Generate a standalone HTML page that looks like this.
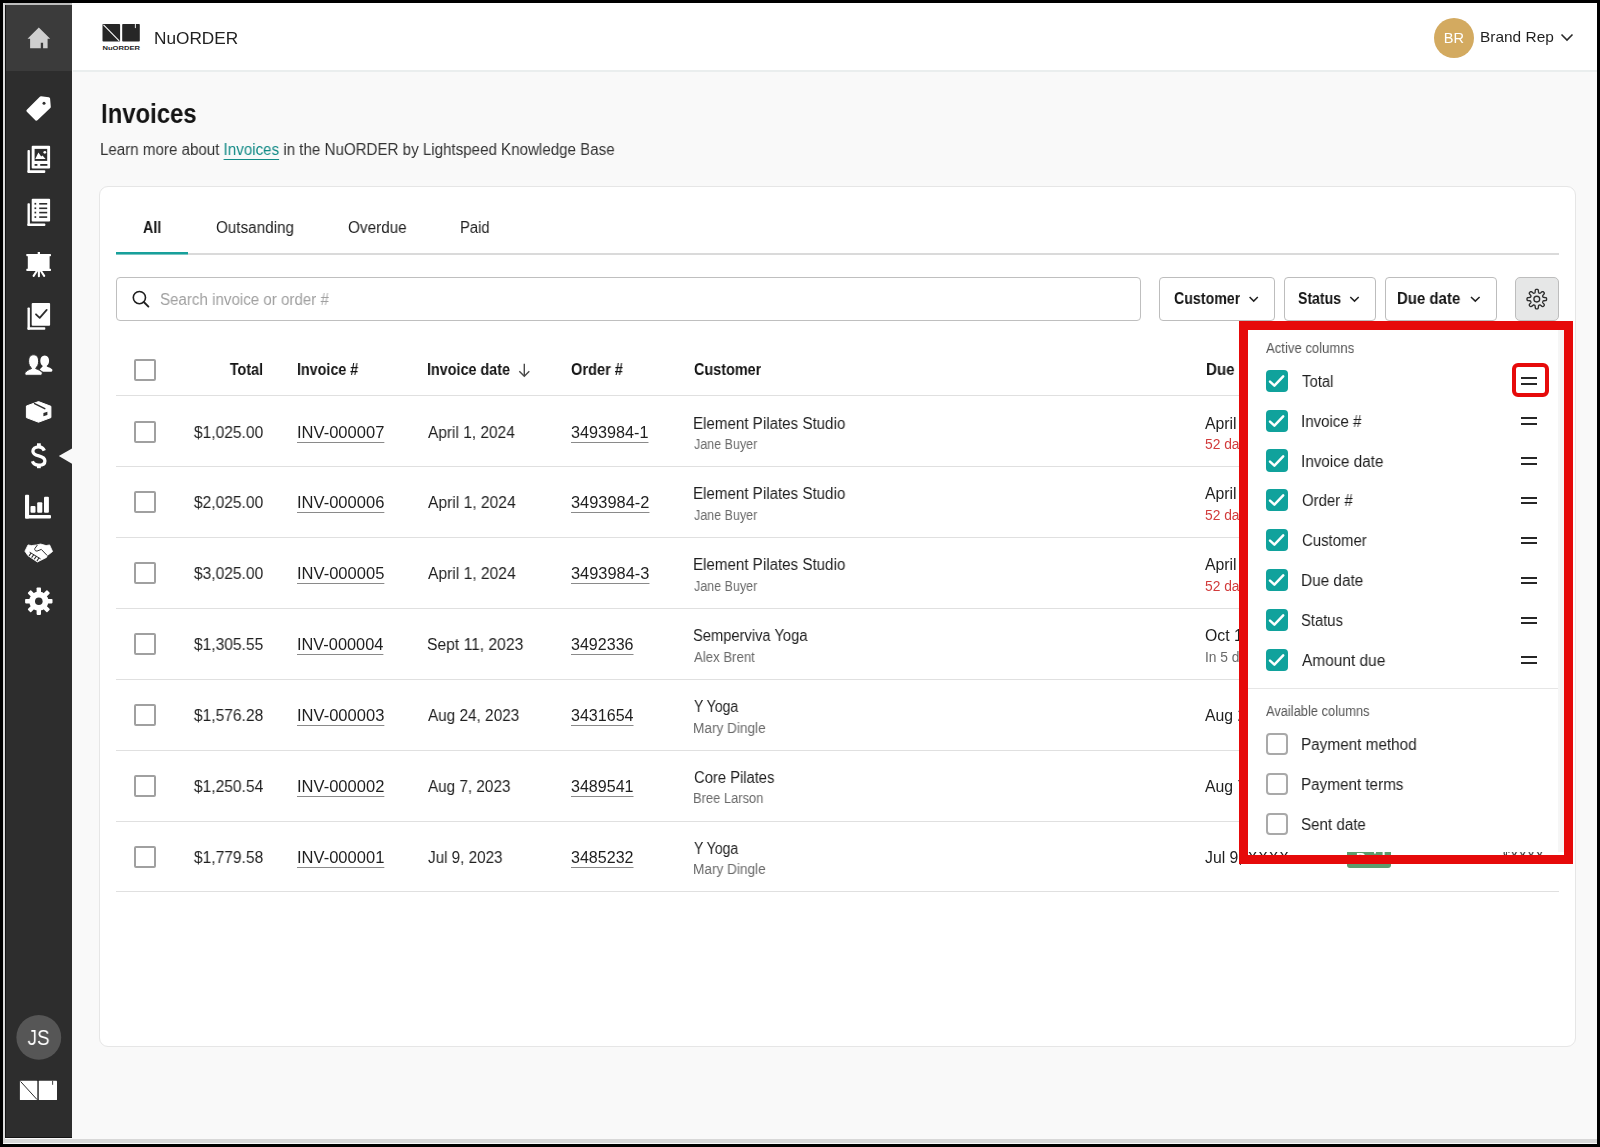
<!DOCTYPE html>
<html><head><meta charset="utf-8"><title>Invoices</title><style>
*{margin:0;padding:0;box-sizing:border-box;}
html,body{width:1600px;height:1147px;overflow:hidden;background:#000;font-family:"Liberation Sans", sans-serif;}
.a{position:absolute;}
.t{position:absolute;white-space:nowrap;font-family:"Liberation Sans", sans-serif;z-index:2;will-change:transform;}
</style></head>
<body>
<!-- frame -->
<div class="a" style="left:3px;top:3px;width:1594px;height:1141px;background:#f9f9f9;"></div>
<div class="a" style="left:3px;top:1139px;width:1594px;height:4px;background:#d8d8d8;"></div>
<!-- header -->
<div class="a" style="left:72px;top:3px;width:1525px;height:67px;background:#fff;"></div>
<div class="a" style="left:73px;top:70px;width:1524px;height:2px;background:#eaeeee;"></div>
<!-- sidebar -->
<div class="a" style="left:3px;top:3px;width:69px;height:2px;background:#bdbdbd;"></div>
<div class="a" style="left:3px;top:3px;width:2px;height:1136px;background:#dcdcdc;"></div>
<div class="a" style="left:5px;top:5px;width:67px;height:1133px;background:#141414;"></div>
<div class="a" style="left:6px;top:5px;width:66px;height:1132px;background:#2d2d2d;"></div>
<div class="a" style="left:6px;top:5px;width:66px;height:66px;background:#3b3b3b;"></div>
<svg class="a" style="left:0;top:0;" width="72" height="1147" viewBox="0 0 72 1147">
 <!-- home -->
 <path d="M38.8 27.5 L50.2 38.8 L47.6 38.8 L47.6 48.2 L43.1 48.2 L43.1 42.7 L40.8 42.7 L40.8 48.2 L30.1 48.2 L30.1 38.8 L27.5 38.8 Z" fill="#cfcfcf"/>
 <!-- tag -->
 <path d="M40.9 97.8 L48.6 98.7 L49.3 106.9 L36.4 119.2 L27.9 110.7 Z" fill="#fff" stroke="#fff" stroke-width="3" stroke-linejoin="round"/>
 <circle cx="44" cy="103.2" r="1.5" fill="#2d2d2d"/>
 <!-- catalog -->
 <rect x="27.5" y="150.1" width="2.4" height="22.8" rx="0.8" fill="#fff"/>
 <rect x="27.5" y="170.3" width="17.8" height="2.6" rx="0.8" fill="#fff"/>
 <rect x="31.7" y="145.7" width="18.4" height="22.9" rx="1" fill="#fff"/>
 <rect x="34.6" y="148.9" width="12.6" height="12" fill="#2d2d2d"/>
 <path d="M35.3 159 L38.4 152.4 L41.2 156.6 L42.5 155.6 L45.6 159 Z" fill="#fff"/>
 <circle cx="44.8" cy="152.3" r="1.4" fill="#fff"/>
 <rect x="34.6" y="164" width="2.8" height="1.8" fill="#2d2d2d"/>
 <rect x="40.2" y="164" width="7.2" height="1.8" fill="#2d2d2d"/>
 <!-- lists -->
 <rect x="27.5" y="203.3" width="2.4" height="22.7" rx="0.8" fill="#fff"/>
 <rect x="27.5" y="223.4" width="17.8" height="2.6" rx="0.8" fill="#fff"/>
 <rect x="31.7" y="198.8" width="18.4" height="22.8" rx="1" fill="#fff"/>
 <g fill="#2d2d2d">
  <rect x="34.5" y="202.9" width="1.7" height="1.7"/><rect x="39.2" y="203" width="8" height="1.6"/>
  <rect x="34.5" y="207.4" width="1.7" height="1.7"/><rect x="39.2" y="207.5" width="8" height="1.6"/>
  <rect x="34.5" y="211.7" width="1.7" height="1.7"/><rect x="39.2" y="211.8" width="8" height="1.6"/>
  <rect x="34.5" y="216.2" width="1.7" height="1.7"/><rect x="39.2" y="216.3" width="8" height="1.6"/>
 </g>
 <!-- presentation -->
 <rect x="26.3" y="254" width="24.7" height="2.2" rx="0.6" fill="#fff"/>
 <rect x="27.8" y="254" width="21.8" height="16.8" fill="#fff"/>
 <rect x="26.3" y="268.8" width="24.7" height="2.1" rx="0.6" fill="#fff"/>
 <rect x="37.7" y="252" width="2.3" height="3" fill="#fff"/>
 <path d="M38.9 270 L38.9 276.3 M36.8 271 L33.6 275.8 M41 271 L44.2 275.8" stroke="#fff" stroke-width="2.1" stroke-linecap="round"/>
 <!-- checklist -->
 <rect x="27.5" y="307.5" width="2.4" height="22.3" rx="0.8" fill="#fff"/>
 <rect x="27.5" y="327.2" width="17.8" height="2.6" rx="0.8" fill="#fff"/>
 <rect x="31.7" y="303" width="18.4" height="22.8" rx="1" fill="#fff"/>
 <path d="M36 314.3 L39.7 317.9 L46.7 309.9" stroke="#2d2d2d" stroke-width="1.8" fill="none" stroke-linecap="round" stroke-linejoin="round"/>
 <!-- people -->
 <path d="M44.7 355.4 C47.6 355.4 49.1 357.6 49.1 360.7 C49.1 363.3 48 365 46.8 365.8 L46.8 366.4 C48.8 367.2 51.6 368.2 52.3 369.5 C52.6 370.3 52.2 371.8 51.2 371.8 L43 371.8 C41.5 370.6 40.3 369.8 39.6 369.4 L42.6 366.4 L42.6 365.8 C41.3 365 40.3 363.3 40.3 360.7 C40.3 357.6 41.8 355.4 44.7 355.4 Z" fill="#fff"/>
 <path d="M33.6 354.8 C37 354.8 38.6 357.5 38.6 361.3 C38.6 364.6 37.4 366.8 35.8 367.9 L35.8 368.6 C38.6 369.6 41.6 371.2 42.2 372.6 C42.5 373.6 42 375.3 40.8 375.3 L26.3 375.3 C25 375.3 24.6 373.8 25 372.8 C25.8 371.2 28.6 369.6 31.4 368.6 L31.4 367.9 C29.8 366.8 28.6 364.6 28.6 361.3 C28.6 357.5 30.2 354.8 33.6 354.8 Z" fill="#fff" stroke="#2d2d2d" stroke-width="1"/>
 <!-- box -->
 <path d="M26.4 406 L38.5 401.6 L50.9 406.3 L50.9 417.6 L38.5 422.2 L26.4 417.6 Z" fill="#fff" stroke="#fff" stroke-width="1" stroke-linejoin="round"/>
 <path d="M34.6 403.6 L44.8 408.7" stroke="#2d2d2d" stroke-width="1.5" stroke-linecap="round"/>
 <path d="M43.4 412.9 L47.4 411.8 L47.4 415 L43.4 416.2 Z" fill="#2d2d2d"/>
 <!-- dollar -->
 <path d="M44.3 450.6 C43.4 448.2 41.4 446.9 38.7 446.9 C35.2 446.9 32.9 448.7 32.9 451.3 C32.9 454.3 35.6 455.1 38.8 455.9 C42.3 456.8 44.9 457.9 44.9 461 C44.9 463.7 42.5 465.2 38.8 465.2 C35.7 465.2 33.3 463.9 32.4 461.3" stroke="#fff" stroke-width="3.3" fill="none" stroke-linecap="butt"/>
 <rect x="37" y="443.3" width="3.8" height="4" fill="#fff"/>
 <rect x="37" y="464.3" width="3.8" height="3.9" fill="#fff"/>
 <!-- active arrow -->
 <path d="M58.8 455.9 L72 448.4 L72 463.7 Z" fill="#f9f9f9"/>
 <!-- chart -->
 <rect x="25" y="494.7" width="4.1" height="23.9" rx="1" fill="#fff"/>
 <rect x="25" y="514.9" width="26" height="3.7" rx="1" fill="#fff"/>
 <rect x="30.5" y="505.9" width="5" height="6.8" rx="1" fill="#fff"/>
 <rect x="37.2" y="502.2" width="5.1" height="10.5" rx="1" fill="#fff"/>
 <rect x="44" y="496.8" width="4.9" height="15.9" rx="1" fill="#fff"/>
 <!-- handshake -->
 <path d="M24.9 551.2 L28 544.9 L31.5 545.6 L36.7 544.9 L40.6 544 L46.1 545.6 L49.6 544.9 L52.6 551.5 L47.2 555.7 L46.5 557.4 L39.5 560.9 L37.4 562 L28 555.7 Z" fill="#fff" stroke="#fff" stroke-width="0.8" stroke-linejoin="round"/>
 <path d="M37.2 545.3 L34.8 548.6 C34.3 549.6 35.3 551.3 37 551.1 L41.3 549.4 L47 555.3" stroke="#2d2d2d" stroke-width="1" fill="none" stroke-linecap="round"/>
 <path d="M29.6 552.2 L40.6 558.9" stroke="#2d2d2d" stroke-width="1"/>
 <path d="M31.3 552.9 L29 555.9 M33.9 554.5 L31.6 557.6 M36.5 556.1 L34.2 559.3 M39.1 557.7 L36.9 561" stroke="#2d2d2d" stroke-width="1.1"/>
 <!-- gear -->
 <g transform="translate(38.8 601.2)" fill="#fff">
  <circle r="9.6"/>
  <rect x="-2.2" y="-13.7" width="4.4" height="27.4" rx="0.8"/>
  <rect x="-2.2" y="-13.7" width="4.4" height="27.4" rx="0.8" transform="rotate(45)"/>
  <rect x="-2.2" y="-13.7" width="4.4" height="27.4" rx="0.8" transform="rotate(90)"/>
  <rect x="-2.2" y="-13.7" width="4.4" height="27.4" rx="0.8" transform="rotate(135)"/>
  <circle r="3.8" fill="#2d2d2d"/>
 </g>
 <!-- JS avatar -->
 <circle cx="38.8" cy="1037.4" r="22.4" fill="#565656"/>
 <!-- bottom logo -->
 <rect x="19.9" y="1080.8" width="17.4" height="19.2" rx="0.6" fill="#fff"/>
 <rect x="38.8" y="1080.8" width="18.2" height="19.2" rx="0.6" fill="#fff"/>
 <path d="M20.6 1081.5 L37 1099.5" stroke="#2d2d2d" stroke-width="1"/>
 <rect x="52.2" y="1080.8" width="0.9" height="4" fill="#2d2d2d"/>
</svg>
<!-- header logo -->
<svg class="a" style="left:0;top:0;" width="260" height="70" viewBox="0 0 260 70">
 <rect x="102.5" y="23.9" width="17.6" height="17.6" rx="0.8" fill="#262626"/>
 <rect x="122.2" y="23.9" width="17.6" height="17.6" rx="0.8" fill="#262626"/>
 <path d="M103.5 24.9 L119.2 40.8" stroke="#fff" stroke-width="1.1"/>
 <rect x="134.9" y="23.9" width="0.9" height="4.2" fill="#fff"/>
 <text x="102.5" y="50.1" font-family="Liberation Sans" font-weight="700" font-size="6.2" fill="#262626" textLength="37.5" lengthAdjust="spacingAndGlyphs">NuORDER</text>
</svg>
<!-- avatar BR -->
<div class="a" style="left:1433.8px;top:17.8px;width:40px;height:40px;border-radius:50%;background:#d3aa60;"></div>
<svg class="a" style="left:1555px;top:28px;" width="24" height="20" viewBox="1555 28 24 20">
 <path d="M1561.5 34.5 L1567 40 L1572.5 34.5" stroke="#2a2a2a" stroke-width="1.6" fill="none"/>
</svg>
<!-- card -->
<div class="a" style="left:99px;top:186px;width:1477px;height:861px;background:#fff;border:1px solid #e6e6e6;border-radius:9px;"></div>
<!-- tabs line -->
<div class="a" style="left:116px;top:253px;width:1443px;height:2px;background:#dadada;"></div>
<div class="a" style="left:116px;top:252px;width:72px;height:2px;background:#17a09b;"></div><div class="a" style="left:116px;top:254px;width:72px;height:1px;background:#7cc6c3;"></div>
<!-- search -->
<div class="a" style="left:116px;top:277px;width:1025px;height:44px;border:1px solid #bfbfbf;border-radius:4px;background:#fff;"></div>
<svg class="a" style="left:128px;top:286px;" width="26" height="26" viewBox="128 286 26 26">
 <circle cx="139.4" cy="297.6" r="6.1" stroke="#1e1e1e" stroke-width="1.6" fill="none"/>
 <path d="M143.8 302 L148.4 306.6" stroke="#222" stroke-width="1.9" stroke-linecap="round"/>
</svg>
<!-- filter buttons -->
<div class="a" style="left:1159px;top:277px;width:116px;height:44px;border:1px solid #bdbdbd;border-radius:4px;background:#fff;"></div>
<div class="a" style="left:1284px;top:277px;width:92px;height:44px;border:1px solid #bdbdbd;border-radius:4px;background:#fff;"></div>
<div class="a" style="left:1385px;top:277px;width:112px;height:44px;border:1px solid #bdbdbd;border-radius:4px;background:#fff;"></div>
<div class="a" style="left:1515px;top:277px;width:44px;height:44px;border:1px solid #bdbdbd;border-radius:5px;background:#e6e7e7;"></div>
<svg class="a" style="left:1100px;top:270px;" width="480" height="60" viewBox="1100 270 480 60">
 <g stroke="#222" stroke-width="1.5" fill="none" stroke-linejoin="miter">
  <path d="M1249.6 297 L1253.7 301.1 L1257.8 297"/>
  <path d="M1350.3 297 L1354.5 301.1 L1358.7 297"/>
  <path d="M1471 297 L1475.3 301.1 L1479.6 297"/>
 </g>
 <g transform="translate(1536.8 299.1)">
  <path d="M0.00 -9.80 L0.26 -9.79 L0.51 -9.77 L0.76 -9.72 L1.01 -9.62 L1.24 -9.42 L1.43 -9.04 L1.55 -8.39 L1.62 -7.60 L1.67 -6.95 L1.76 -6.56 L1.88 -6.36 L2.02 -6.23 L2.18 -6.14 L2.33 -6.07 L2.49 -6.01 L2.65 -5.94 L2.81 -5.88 L2.97 -5.84 L3.16 -5.82 L3.40 -5.89 L3.74 -6.10 L4.23 -6.51 L4.83 -7.03 L5.38 -7.40 L5.79 -7.54 L6.09 -7.52 L6.33 -7.41 L6.54 -7.27 L6.74 -7.11 L6.93 -6.93 L7.11 -6.74 L7.27 -6.54 L7.41 -6.33 L7.52 -6.09 L7.54 -5.79 L7.40 -5.38 L7.03 -4.83 L6.51 -4.23 L6.10 -3.74 L5.89 -3.40 L5.82 -3.16 L5.84 -2.97 L5.88 -2.81 L5.94 -2.65 L6.01 -2.49 L6.07 -2.33 L6.14 -2.18 L6.23 -2.02 L6.36 -1.88 L6.56 -1.76 L6.95 -1.67 L7.60 -1.62 L8.39 -1.55 L9.04 -1.43 L9.42 -1.24 L9.62 -1.01 L9.72 -0.76 L9.77 -0.51 L9.79 -0.26 L9.80 -0.00 L9.79 0.26 L9.77 0.51 L9.72 0.76 L9.62 1.01 L9.42 1.24 L9.04 1.43 L8.39 1.55 L7.60 1.62 L6.95 1.67 L6.56 1.76 L6.36 1.88 L6.23 2.02 L6.14 2.18 L6.07 2.33 L6.01 2.49 L5.94 2.65 L5.88 2.81 L5.84 2.97 L5.82 3.16 L5.89 3.40 L6.10 3.74 L6.51 4.23 L7.03 4.83 L7.40 5.38 L7.54 5.79 L7.52 6.09 L7.41 6.33 L7.27 6.54 L7.11 6.74 L6.93 6.93 L6.74 7.11 L6.54 7.27 L6.33 7.41 L6.09 7.52 L5.79 7.54 L5.38 7.40 L4.83 7.03 L4.23 6.51 L3.74 6.10 L3.40 5.89 L3.16 5.82 L2.97 5.84 L2.81 5.88 L2.65 5.94 L2.49 6.01 L2.33 6.07 L2.18 6.14 L2.02 6.23 L1.88 6.36 L1.76 6.56 L1.67 6.95 L1.62 7.60 L1.55 8.39 L1.43 9.04 L1.24 9.42 L1.01 9.62 L0.76 9.72 L0.51 9.77 L0.26 9.79 L0.00 9.80 L-0.26 9.79 L-0.51 9.77 L-0.76 9.72 L-1.01 9.62 L-1.24 9.42 L-1.43 9.04 L-1.55 8.39 L-1.62 7.60 L-1.67 6.95 L-1.76 6.56 L-1.88 6.36 L-2.02 6.23 L-2.18 6.14 L-2.33 6.07 L-2.49 6.01 L-2.65 5.94 L-2.81 5.88 L-2.97 5.84 L-3.16 5.82 L-3.40 5.89 L-3.74 6.10 L-4.23 6.51 L-4.83 7.03 L-5.38 7.40 L-5.79 7.54 L-6.09 7.52 L-6.33 7.41 L-6.54 7.27 L-6.74 7.11 L-6.93 6.93 L-7.11 6.74 L-7.27 6.54 L-7.41 6.33 L-7.52 6.09 L-7.54 5.79 L-7.40 5.38 L-7.03 4.83 L-6.51 4.23 L-6.10 3.74 L-5.89 3.40 L-5.82 3.16 L-5.84 2.97 L-5.88 2.81 L-5.94 2.65 L-6.01 2.49 L-6.07 2.33 L-6.14 2.18 L-6.23 2.02 L-6.36 1.88 L-6.56 1.76 L-6.95 1.67 L-7.60 1.62 L-8.39 1.55 L-9.04 1.43 L-9.42 1.24 L-9.62 1.01 L-9.72 0.76 L-9.77 0.51 L-9.79 0.26 L-9.80 0.00 L-9.79 -0.26 L-9.77 -0.51 L-9.72 -0.76 L-9.62 -1.01 L-9.42 -1.24 L-9.04 -1.43 L-8.39 -1.55 L-7.60 -1.62 L-6.95 -1.67 L-6.56 -1.76 L-6.36 -1.88 L-6.23 -2.02 L-6.14 -2.18 L-6.07 -2.33 L-6.01 -2.49 L-5.94 -2.65 L-5.88 -2.81 L-5.84 -2.97 L-5.82 -3.16 L-5.89 -3.40 L-6.10 -3.74 L-6.51 -4.23 L-7.03 -4.83 L-7.40 -5.38 L-7.54 -5.79 L-7.52 -6.09 L-7.41 -6.33 L-7.27 -6.54 L-7.11 -6.74 L-6.93 -6.93 L-6.74 -7.11 L-6.54 -7.27 L-6.33 -7.41 L-6.09 -7.52 L-5.79 -7.54 L-5.38 -7.40 L-4.83 -7.03 L-4.23 -6.51 L-3.74 -6.10 L-3.40 -5.89 L-3.16 -5.82 L-2.97 -5.84 L-2.81 -5.88 L-2.65 -5.94 L-2.49 -6.01 L-2.33 -6.07 L-2.18 -6.14 L-2.02 -6.23 L-1.88 -6.36 L-1.76 -6.56 L-1.67 -6.95 L-1.62 -7.60 L-1.55 -8.39 L-1.43 -9.04 L-1.24 -9.42 L-1.01 -9.62 L-0.76 -9.72 L-0.51 -9.77 L-0.26 -9.79 Z" fill="none" stroke="#2e2e2e" stroke-width="1.35"/>
  <circle r="2.9" fill="none" stroke="#2e2e2e" stroke-width="1.35"/>
 </g>
</svg>

<div class="a" style="left:134.2px;top:358.70px;width:21.6px;height:22px;border:2px solid #a0a0a0;border-radius:2px;background:#fff;z-index:1;"></div>
<div class="a" style="left:134.2px;top:420.60px;width:21.6px;height:22px;border:2px solid #a0a0a0;border-radius:2px;background:#fff;z-index:1;"></div>
<div class="a" style="left:134.2px;top:491.45px;width:21.6px;height:22px;border:2px solid #a0a0a0;border-radius:2px;background:#fff;z-index:1;"></div>
<div class="a" style="left:134.2px;top:562.30px;width:21.6px;height:22px;border:2px solid #a0a0a0;border-radius:2px;background:#fff;z-index:1;"></div>
<div class="a" style="left:134.2px;top:633.15px;width:21.6px;height:22px;border:2px solid #a0a0a0;border-radius:2px;background:#fff;z-index:1;"></div>
<div class="a" style="left:134.2px;top:704.00px;width:21.6px;height:22px;border:2px solid #a0a0a0;border-radius:2px;background:#fff;z-index:1;"></div>
<div class="a" style="left:134.2px;top:774.85px;width:21.6px;height:22px;border:2px solid #a0a0a0;border-radius:2px;background:#fff;z-index:1;"></div>
<div class="a" style="left:134.2px;top:845.70px;width:21.6px;height:22px;border:2px solid #a0a0a0;border-radius:2px;background:#fff;z-index:1;"></div>
<div class="a" style="left:116px;top:395.40px;width:1443px;height:1px;background:#e0e0e0;z-index:1;"></div>
<div class="a" style="left:116px;top:466.25px;width:1443px;height:1px;background:#e0e0e0;z-index:1;"></div>
<div class="a" style="left:116px;top:537.10px;width:1443px;height:1px;background:#e0e0e0;z-index:1;"></div>
<div class="a" style="left:116px;top:607.95px;width:1443px;height:1px;background:#e0e0e0;z-index:1;"></div>
<div class="a" style="left:116px;top:678.80px;width:1443px;height:1px;background:#e0e0e0;z-index:1;"></div>
<div class="a" style="left:116px;top:749.65px;width:1443px;height:1px;background:#e0e0e0;z-index:1;"></div>
<div class="a" style="left:116px;top:820.50px;width:1443px;height:1px;background:#e0e0e0;z-index:1;"></div>
<div class="a" style="left:116px;top:891.35px;width:1443px;height:1px;background:#e0e0e0;z-index:1;"></div>
<svg class="a" style="left:512px;top:360px;z-index:2;" width="24" height="22" viewBox="512 360 24 22"><g stroke="#4a4a4a" stroke-width="1.4" fill="none"><path d="M524.3 363.8 L524.3 376"/><path d="M519.3 371.2 L524.3 376.2 L529.3 371.2"/></g></svg>
<div class="a" style="left:1346.7px;top:846px;width:44px;height:21.5px;background:#5b9d6d;border-radius:3px;z-index:1;"></div>
<div class="a" style="left:1239px;top:321px;width:334px;height:543px;border:9px solid #e60a0a;z-index:7;"></div>
<div class="a" style="left:1248px;top:330px;width:316px;height:522px;background:#fff;z-index:5;"></div>
<div class="a" style="left:1558px;top:330px;width:6px;height:522px;background:#f6f6f6;z-index:5;"></div>
<div class="a" style="left:1248px;top:688px;width:310px;height:1px;background:#e6e6e6;z-index:5;"></div>
<div class="a" style="left:1265.7px;top:369.70px;width:22.2px;height:22.2px;border-radius:4px;background:#10a29c;z-index:6;"></div>
<svg class="a" style="left:1260px;top:364.80px;z-index:6;" width="34" height="32" viewBox="1260 364.80 34 32"><path d="M1270 381.40 L1274.4 385.40 L1283.2 376.20" stroke="#fff" stroke-width="2.5" fill="none" stroke-linecap="round" stroke-linejoin="round"/></svg>
<div class="a" style="left:1521px;top:377px;width:16px;height:2px;background:#262626;z-index:6;"></div>
<div class="a" style="left:1521px;top:383px;width:16px;height:2px;background:#262626;z-index:6;"></div>
<div class="a" style="left:1265.7px;top:409.55px;width:22.2px;height:22.2px;border-radius:4px;background:#10a29c;z-index:6;"></div>
<svg class="a" style="left:1260px;top:404.65px;z-index:6;" width="34" height="32" viewBox="1260 404.65 34 32"><path d="M1270 421.25 L1274.4 425.25 L1283.2 416.05" stroke="#fff" stroke-width="2.5" fill="none" stroke-linecap="round" stroke-linejoin="round"/></svg>
<div class="a" style="left:1521px;top:417px;width:16px;height:2px;background:#262626;z-index:6;"></div>
<div class="a" style="left:1521px;top:423px;width:16px;height:2px;background:#262626;z-index:6;"></div>
<div class="a" style="left:1265.7px;top:449.40px;width:22.2px;height:22.2px;border-radius:4px;background:#10a29c;z-index:6;"></div>
<svg class="a" style="left:1260px;top:444.50px;z-index:6;" width="34" height="32" viewBox="1260 444.50 34 32"><path d="M1270 461.10 L1274.4 465.10 L1283.2 455.90" stroke="#fff" stroke-width="2.5" fill="none" stroke-linecap="round" stroke-linejoin="round"/></svg>
<div class="a" style="left:1521px;top:457px;width:16px;height:2px;background:#262626;z-index:6;"></div>
<div class="a" style="left:1521px;top:463px;width:16px;height:2px;background:#262626;z-index:6;"></div>
<div class="a" style="left:1265.7px;top:489.25px;width:22.2px;height:22.2px;border-radius:4px;background:#10a29c;z-index:6;"></div>
<svg class="a" style="left:1260px;top:484.35px;z-index:6;" width="34" height="32" viewBox="1260 484.35 34 32"><path d="M1270 500.95 L1274.4 504.95 L1283.2 495.75" stroke="#fff" stroke-width="2.5" fill="none" stroke-linecap="round" stroke-linejoin="round"/></svg>
<div class="a" style="left:1521px;top:497px;width:16px;height:2px;background:#262626;z-index:6;"></div>
<div class="a" style="left:1521px;top:502px;width:16px;height:2px;background:#262626;z-index:6;"></div>
<div class="a" style="left:1265.7px;top:529.10px;width:22.2px;height:22.2px;border-radius:4px;background:#10a29c;z-index:6;"></div>
<svg class="a" style="left:1260px;top:524.20px;z-index:6;" width="34" height="32" viewBox="1260 524.20 34 32"><path d="M1270 540.80 L1274.4 544.80 L1283.2 535.60" stroke="#fff" stroke-width="2.5" fill="none" stroke-linecap="round" stroke-linejoin="round"/></svg>
<div class="a" style="left:1521px;top:537px;width:16px;height:2px;background:#262626;z-index:6;"></div>
<div class="a" style="left:1521px;top:542px;width:16px;height:2px;background:#262626;z-index:6;"></div>
<div class="a" style="left:1265.7px;top:568.95px;width:22.2px;height:22.2px;border-radius:4px;background:#10a29c;z-index:6;"></div>
<svg class="a" style="left:1260px;top:564.05px;z-index:6;" width="34" height="32" viewBox="1260 564.05 34 32"><path d="M1270 580.65 L1274.4 584.65 L1283.2 575.45" stroke="#fff" stroke-width="2.5" fill="none" stroke-linecap="round" stroke-linejoin="round"/></svg>
<div class="a" style="left:1521px;top:577px;width:16px;height:2px;background:#262626;z-index:6;"></div>
<div class="a" style="left:1521px;top:582px;width:16px;height:2px;background:#262626;z-index:6;"></div>
<div class="a" style="left:1265.7px;top:608.80px;width:22.2px;height:22.2px;border-radius:4px;background:#10a29c;z-index:6;"></div>
<svg class="a" style="left:1260px;top:603.90px;z-index:6;" width="34" height="32" viewBox="1260 603.90 34 32"><path d="M1270 620.50 L1274.4 624.50 L1283.2 615.30" stroke="#fff" stroke-width="2.5" fill="none" stroke-linecap="round" stroke-linejoin="round"/></svg>
<div class="a" style="left:1521px;top:617px;width:16px;height:2px;background:#262626;z-index:6;"></div>
<div class="a" style="left:1521px;top:622px;width:16px;height:2px;background:#262626;z-index:6;"></div>
<div class="a" style="left:1265.7px;top:648.65px;width:22.2px;height:22.2px;border-radius:4px;background:#10a29c;z-index:6;"></div>
<svg class="a" style="left:1260px;top:643.75px;z-index:6;" width="34" height="32" viewBox="1260 643.75 34 32"><path d="M1270 660.35 L1274.4 664.35 L1283.2 655.15" stroke="#fff" stroke-width="2.5" fill="none" stroke-linecap="round" stroke-linejoin="round"/></svg>
<div class="a" style="left:1521px;top:656px;width:16px;height:2px;background:#262626;z-index:6;"></div>
<div class="a" style="left:1521px;top:662px;width:16px;height:2px;background:#262626;z-index:6;"></div>
<div class="a" style="left:1265.7px;top:732.70px;width:22.2px;height:22.2px;border-radius:4px;border:2px solid #a9a9a9;background:#fff;z-index:6;"></div>
<div class="a" style="left:1265.7px;top:772.75px;width:22.2px;height:22.2px;border-radius:4px;border:2px solid #a9a9a9;background:#fff;z-index:6;"></div>
<div class="a" style="left:1265.7px;top:812.80px;width:22.2px;height:22.2px;border-radius:4px;border:2px solid #a9a9a9;background:#fff;z-index:6;"></div>
<div class="a" style="left:1511.8px;top:363px;width:37px;height:33.5px;border:4.5px solid #e60a0a;border-radius:6px;z-index:7;"></div>
<div class="t" id="hdr_nuorder" style="top:30.21px;font-size:17px;line-height:17px;font-weight:400;color:#222;transform:scaleX(1.0127);transform-origin:left center;left:154.10px;">NuORDER</div>
<div class="t" id="hdr_br" style="top:30.54px;font-size:14.6px;line-height:14.6px;font-weight:400;color:#fff;left:1433.80px;width:40px;text-align:center;">BR</div>
<div class="t" id="hdr_brandrep" style="top:30.37px;font-size:14.8px;line-height:14.8px;font-weight:400;color:#1f1f1f;transform:scaleX(1.0434);transform-origin:left center;left:1479.52px;">Brand Rep</div>
<div class="t" id="title" style="top:99.52px;font-size:27.5px;line-height:27.5px;font-weight:700;color:#141414;transform:scaleX(0.8683);transform-origin:left center;left:100.60px;">Invoices</div>
<div class="t" id="sub1" style="top:141.63px;font-size:15.8px;line-height:15.8px;font-weight:400;color:#333;transform:scaleX(0.9575);transform-origin:left center;left:99.76px;">Learn more about <span style="color:#128a86;text-decoration:underline;text-underline-offset:4px;text-decoration-thickness:1px;">Invoices</span> in the NuORDER by Lightspeed Knowledge Base</div>
<div class="t" id="tab_all" style="top:220.29px;font-size:15.6px;line-height:15.6px;font-weight:700;color:#141414;transform:scaleX(0.9194);transform-origin:left center;left:142.92px;">All</div>
<div class="t" id="tab_out" style="top:220.13px;font-size:15.8px;line-height:15.8px;font-weight:400;color:#1f1f1f;transform:scaleX(0.9650);transform-origin:left center;left:216.00px;">Outsanding</div>
<div class="t" id="tab_ovd" style="top:220.13px;font-size:15.8px;line-height:15.8px;font-weight:400;color:#1f1f1f;transform:scaleX(0.9693);transform-origin:left center;left:348.00px;">Overdue</div>
<div class="t" id="tab_paid" style="top:220.13px;font-size:15.8px;line-height:15.8px;font-weight:400;color:#1f1f1f;transform:scaleX(0.9382);transform-origin:left center;left:459.94px;">Paid</div>
<div class="t" id="search_ph" style="top:292.13px;font-size:15.8px;line-height:15.8px;font-weight:400;color:#a0a0a0;transform:scaleX(0.9569);transform-origin:left center;left:160.18px;">Search invoice or order #</div>
<div class="t" id="btn_customer" style="top:290.89px;font-size:15.6px;line-height:15.6px;font-weight:700;color:#141414;transform:scaleX(0.9096);transform-origin:left center;left:1173.66px;">Customer</div>
<div class="t" id="btn_status" style="top:290.89px;font-size:15.6px;line-height:15.6px;font-weight:700;color:#141414;transform:scaleX(0.9024);transform-origin:left center;left:1297.84px;">Status</div>
<div class="t" id="btn_due" style="top:290.89px;font-size:15.6px;line-height:15.6px;font-weight:700;color:#141414;transform:scaleX(0.9599);transform-origin:left center;left:1397.36px;">Due date</div>
<div class="t" id="th_total" style="top:362.19px;font-size:15.6px;line-height:15.6px;font-weight:700;color:#141414;transform:scaleX(0.9213);transform-origin:right center;right:1337.18px;">Total</div>
<div class="t" id="th_inv" style="top:362.19px;font-size:15.6px;line-height:15.6px;font-weight:700;color:#141414;transform:scaleX(0.9174);transform-origin:left center;left:296.94px;">Invoice #</div>
<div class="t" id="th_invdate" style="top:362.19px;font-size:15.6px;line-height:15.6px;font-weight:700;color:#141414;transform:scaleX(0.9210);transform-origin:left center;left:427.44px;">Invoice date</div>
<div class="t" id="th_order" style="top:362.19px;font-size:15.6px;line-height:15.6px;font-weight:700;color:#141414;transform:scaleX(0.9353);transform-origin:left center;left:570.58px;">Order #</div>
<div class="t" id="th_cust" style="top:362.19px;font-size:15.6px;line-height:15.6px;font-weight:700;color:#141414;transform:scaleX(0.9232);transform-origin:left center;left:693.84px;">Customer</div>
<div class="t" id="th_due" style="top:362.19px;font-size:15.6px;line-height:15.6px;font-weight:700;color:#141414;left:1205.90px;transform:scaleX(0.97);transform-origin:left center;">Due date</div>
<div class="t" id="r0_total" style="top:424.53px;font-size:15.8px;line-height:15.8px;font-weight:400;color:#1f1f1f;transform:scaleX(0.9873);transform-origin:right center;right:1337.18px;">$1,025.00</div>
<div class="t" id="r0_inv" style="top:424.53px;font-size:15.8px;line-height:15.8px;font-weight:400;color:#1f1f1f;transform:scaleX(1.0468);transform-origin:left center;left:296.94px;text-decoration:underline;text-underline-offset:4px;text-decoration-thickness:1px;text-decoration-color:#8a8a8a;">INV-000007</div>
<div class="t" id="r0_date" style="top:424.53px;font-size:15.8px;line-height:15.8px;font-weight:400;color:#1f1f1f;transform:scaleX(0.9791);transform-origin:left center;left:428.34px;">April 1, 2024</div>
<div class="t" id="r0_order" style="top:424.53px;font-size:15.8px;line-height:15.8px;font-weight:400;color:#1f1f1f;transform:scaleX(1.0256);transform-origin:left center;left:570.58px;text-decoration:underline;text-underline-offset:4px;text-decoration-thickness:1px;text-decoration-color:#8a8a8a;">3493984-1</div>
<div class="t" id="r0_cust" style="top:415.53px;font-size:15.8px;line-height:15.8px;font-weight:400;color:#1f1f1f;transform:scaleX(0.9581);transform-origin:left center;left:692.94px;">Element Pilates Studio</div>
<div class="t" id="r0_sub" style="top:438.22px;font-size:13.8px;line-height:13.8px;font-weight:400;color:#6a6a6a;transform:scaleX(0.9055);transform-origin:left center;left:693.84px;">Jane Buyer</div>
<div class="t" id="r0_due" style="top:415.53px;font-size:15.8px;line-height:15.8px;font-weight:400;color:#1f1f1f;left:1205.00px;">April 1, XXXX</div>
<div class="t" id="r0_due2" style="top:438.22px;font-size:13.8px;line-height:13.8px;font-weight:400;color:#d23c3c;left:1205.00px;">52 days overdue</div>
<div class="t" id="r1_total" style="top:495.38px;font-size:15.8px;line-height:15.8px;font-weight:400;color:#1f1f1f;transform:scaleX(0.9873);transform-origin:right center;right:1337.18px;">$2,025.00</div>
<div class="t" id="r1_inv" style="top:495.38px;font-size:15.8px;line-height:15.8px;font-weight:400;color:#1f1f1f;transform:scaleX(1.0468);transform-origin:left center;left:296.94px;text-decoration:underline;text-underline-offset:4px;text-decoration-thickness:1px;text-decoration-color:#8a8a8a;">INV-000006</div>
<div class="t" id="r1_date" style="top:495.38px;font-size:15.8px;line-height:15.8px;font-weight:400;color:#1f1f1f;transform:scaleX(0.9893);transform-origin:left center;left:428.34px;">April 1, 2024</div>
<div class="t" id="r1_order" style="top:495.38px;font-size:15.8px;line-height:15.8px;font-weight:400;color:#1f1f1f;transform:scaleX(1.0386);transform-origin:left center;left:570.58px;text-decoration:underline;text-underline-offset:4px;text-decoration-thickness:1px;text-decoration-color:#8a8a8a;">3493984-2</div>
<div class="t" id="r1_cust" style="top:486.38px;font-size:15.8px;line-height:15.8px;font-weight:400;color:#1f1f1f;transform:scaleX(0.9580);transform-origin:left center;left:692.94px;">Element Pilates Studio</div>
<div class="t" id="r1_sub" style="top:509.07px;font-size:13.8px;line-height:13.8px;font-weight:400;color:#6a6a6a;transform:scaleX(0.9055);transform-origin:left center;left:693.84px;">Jane Buyer</div>
<div class="t" id="r1_due" style="top:486.38px;font-size:15.8px;line-height:15.8px;font-weight:400;color:#1f1f1f;left:1205.00px;">April 1, XXXX</div>
<div class="t" id="r1_due2" style="top:509.07px;font-size:13.8px;line-height:13.8px;font-weight:400;color:#d23c3c;left:1205.00px;">52 days overdue</div>
<div class="t" id="r2_total" style="top:566.23px;font-size:15.8px;line-height:15.8px;font-weight:400;color:#1f1f1f;transform:scaleX(0.9873);transform-origin:right center;right:1337.18px;">$3,025.00</div>
<div class="t" id="r2_inv" style="top:566.23px;font-size:15.8px;line-height:15.8px;font-weight:400;color:#1f1f1f;transform:scaleX(1.0468);transform-origin:left center;left:296.94px;text-decoration:underline;text-underline-offset:4px;text-decoration-thickness:1px;text-decoration-color:#8a8a8a;">INV-000005</div>
<div class="t" id="r2_date" style="top:566.23px;font-size:15.8px;line-height:15.8px;font-weight:400;color:#1f1f1f;transform:scaleX(0.9893);transform-origin:left center;left:428.34px;">April 1, 2024</div>
<div class="t" id="r2_order" style="top:566.23px;font-size:15.8px;line-height:15.8px;font-weight:400;color:#1f1f1f;transform:scaleX(1.0386);transform-origin:left center;left:570.58px;text-decoration:underline;text-underline-offset:4px;text-decoration-thickness:1px;text-decoration-color:#8a8a8a;">3493984-3</div>
<div class="t" id="r2_cust" style="top:557.23px;font-size:15.8px;line-height:15.8px;font-weight:400;color:#1f1f1f;transform:scaleX(0.9580);transform-origin:left center;left:692.94px;">Element Pilates Studio</div>
<div class="t" id="r2_sub" style="top:579.92px;font-size:13.8px;line-height:13.8px;font-weight:400;color:#6a6a6a;transform:scaleX(0.9055);transform-origin:left center;left:693.84px;">Jane Buyer</div>
<div class="t" id="r2_due" style="top:557.23px;font-size:15.8px;line-height:15.8px;font-weight:400;color:#1f1f1f;left:1205.00px;">April 1, XXXX</div>
<div class="t" id="r2_due2" style="top:579.92px;font-size:13.8px;line-height:13.8px;font-weight:400;color:#d23c3c;left:1205.00px;">52 days overdue</div>
<div class="t" id="r3_total" style="top:637.08px;font-size:15.8px;line-height:15.8px;font-weight:400;color:#1f1f1f;transform:scaleX(0.9873);transform-origin:right center;right:1337.18px;">$1,305.55</div>
<div class="t" id="r3_inv" style="top:637.08px;font-size:15.8px;line-height:15.8px;font-weight:400;color:#1f1f1f;transform:scaleX(1.0353);transform-origin:left center;left:296.94px;text-decoration:underline;text-underline-offset:4px;text-decoration-thickness:1px;text-decoration-color:#8a8a8a;">INV-000004</div>
<div class="t" id="r3_date" style="top:637.08px;font-size:15.8px;line-height:15.8px;font-weight:400;color:#1f1f1f;transform:scaleX(0.9906);transform-origin:left center;left:427.44px;">Sept 11, 2023</div>
<div class="t" id="r3_order" style="top:637.08px;font-size:15.8px;line-height:15.8px;font-weight:400;color:#1f1f1f;transform:scaleX(1.0165);transform-origin:left center;left:570.58px;text-decoration:underline;text-underline-offset:4px;text-decoration-thickness:1px;text-decoration-color:#8a8a8a;">3492336</div>
<div class="t" id="r3_cust" style="top:628.08px;font-size:15.8px;line-height:15.8px;font-weight:400;color:#1f1f1f;transform:scaleX(0.9307);transform-origin:left center;left:692.94px;">Semperviva Yoga</div>
<div class="t" id="r3_sub" style="top:650.77px;font-size:13.8px;line-height:13.8px;font-weight:400;color:#6a6a6a;transform:scaleX(0.9558);transform-origin:left center;left:693.84px;">Alex Brent</div>
<div class="t" id="r3_due" style="top:628.08px;font-size:15.8px;line-height:15.8px;font-weight:400;color:#1f1f1f;left:1205.00px;">Oct 11, XXXX</div>
<div class="t" id="r3_due2" style="top:650.77px;font-size:13.8px;line-height:13.8px;font-weight:400;color:#6a6a6a;left:1205.00px;">In 5 days</div>
<div class="t" id="r4_total" style="top:707.93px;font-size:15.8px;line-height:15.8px;font-weight:400;color:#1f1f1f;transform:scaleX(0.9873);transform-origin:right center;right:1337.18px;">$1,576.28</div>
<div class="t" id="r4_inv" style="top:707.93px;font-size:15.8px;line-height:15.8px;font-weight:400;color:#1f1f1f;transform:scaleX(1.0468);transform-origin:left center;left:296.94px;text-decoration:underline;text-underline-offset:4px;text-decoration-thickness:1px;text-decoration-color:#8a8a8a;">INV-000003</div>
<div class="t" id="r4_date" style="top:707.93px;font-size:15.8px;line-height:15.8px;font-weight:400;color:#1f1f1f;transform:scaleX(0.9700);transform-origin:left center;left:428.34px;">Aug 24, 2023</div>
<div class="t" id="r4_order" style="top:707.93px;font-size:15.8px;line-height:15.8px;font-weight:400;color:#1f1f1f;transform:scaleX(1.0165);transform-origin:left center;left:570.58px;text-decoration:underline;text-underline-offset:4px;text-decoration-thickness:1px;text-decoration-color:#8a8a8a;">3431654</div>
<div class="t" id="r4_cust" style="top:698.93px;font-size:15.8px;line-height:15.8px;font-weight:400;color:#1f1f1f;transform:scaleX(0.8874);transform-origin:left center;left:693.84px;">Y Yoga</div>
<div class="t" id="r4_sub" style="top:721.62px;font-size:13.8px;line-height:13.8px;font-weight:400;color:#6a6a6a;transform:scaleX(0.9877);transform-origin:left center;left:692.94px;">Mary Dingle</div>
<div class="t" id="r4_due" style="top:707.93px;font-size:15.8px;line-height:15.8px;font-weight:400;color:#1f1f1f;left:1205.00px;">Aug 24, XXXX</div>
<div class="t" id="r5_total" style="top:778.78px;font-size:15.8px;line-height:15.8px;font-weight:400;color:#1f1f1f;transform:scaleX(0.9873);transform-origin:right center;right:1337.18px;">$1,250.54</div>
<div class="t" id="r5_inv" style="top:778.78px;font-size:15.8px;line-height:15.8px;font-weight:400;color:#1f1f1f;transform:scaleX(1.0468);transform-origin:left center;left:296.94px;text-decoration:underline;text-underline-offset:4px;text-decoration-thickness:1px;text-decoration-color:#8a8a8a;">INV-000002</div>
<div class="t" id="r5_date" style="top:778.78px;font-size:15.8px;line-height:15.8px;font-weight:400;color:#1f1f1f;transform:scaleX(0.9669);transform-origin:left center;left:428.34px;">Aug 7, 2023</div>
<div class="t" id="r5_order" style="top:778.78px;font-size:15.8px;line-height:15.8px;font-weight:400;color:#1f1f1f;transform:scaleX(1.0165);transform-origin:left center;left:570.58px;text-decoration:underline;text-underline-offset:4px;text-decoration-thickness:1px;text-decoration-color:#8a8a8a;">3489541</div>
<div class="t" id="r5_cust" style="top:769.78px;font-size:15.8px;line-height:15.8px;font-weight:400;color:#1f1f1f;transform:scaleX(0.9339);transform-origin:left center;left:693.84px;">Core Pilates</div>
<div class="t" id="r5_sub" style="top:792.47px;font-size:13.8px;line-height:13.8px;font-weight:400;color:#6a6a6a;transform:scaleX(0.9358);transform-origin:left center;left:692.94px;">Bree Larson</div>
<div class="t" id="r5_due" style="top:778.78px;font-size:15.8px;line-height:15.8px;font-weight:400;color:#1f1f1f;left:1205.00px;">Aug 7, XXXX</div>
<div class="t" id="r6_total" style="top:849.63px;font-size:15.8px;line-height:15.8px;font-weight:400;color:#1f1f1f;transform:scaleX(0.9873);transform-origin:right center;right:1337.18px;">$1,779.58</div>
<div class="t" id="r6_inv" style="top:849.63px;font-size:15.8px;line-height:15.8px;font-weight:400;color:#1f1f1f;transform:scaleX(1.0468);transform-origin:left center;left:296.94px;text-decoration:underline;text-underline-offset:4px;text-decoration-thickness:1px;text-decoration-color:#8a8a8a;">INV-000001</div>
<div class="t" id="r6_date" style="top:849.63px;font-size:15.8px;line-height:15.8px;font-weight:400;color:#1f1f1f;transform:scaleX(0.9636);transform-origin:left center;left:428.34px;">Jul 9, 2023</div>
<div class="t" id="r6_order" style="top:849.63px;font-size:15.8px;line-height:15.8px;font-weight:400;color:#1f1f1f;transform:scaleX(1.0165);transform-origin:left center;left:570.58px;text-decoration:underline;text-underline-offset:4px;text-decoration-thickness:1px;text-decoration-color:#8a8a8a;">3485232</div>
<div class="t" id="r6_cust" style="top:840.63px;font-size:15.8px;line-height:15.8px;font-weight:400;color:#1f1f1f;transform:scaleX(0.8874);transform-origin:left center;left:693.84px;">Y Yoga</div>
<div class="t" id="r6_sub" style="top:863.32px;font-size:13.8px;line-height:13.8px;font-weight:400;color:#6a6a6a;transform:scaleX(0.9877);transform-origin:left center;left:692.94px;">Mary Dingle</div>
<div class="t" id="r6_due" style="top:849.63px;font-size:15.8px;line-height:15.8px;font-weight:400;color:#1f1f1f;left:1205.00px;">Jul 9, XXXX</div>
<div class="t" id="p_active" style="top:342.22px;font-size:13.8px;line-height:13.8px;font-weight:400;color:#555;transform:scaleX(0.9499);transform-origin:left center;left:1265.92px;z-index:6;">Active columns</div>
<div class="t" id="p_item0" style="top:373.83px;font-size:15.8px;line-height:15.8px;font-weight:400;color:#1f1f1f;transform:scaleX(0.9454);transform-origin:left center;left:1301.50px;z-index:6;">Total</div>
<div class="t" id="p_item1" style="top:413.68px;font-size:15.8px;line-height:15.8px;font-weight:400;color:#1f1f1f;transform:scaleX(0.9554);transform-origin:left center;left:1300.60px;z-index:6;">Invoice #</div>
<div class="t" id="p_item2" style="top:453.53px;font-size:15.8px;line-height:15.8px;font-weight:400;color:#1f1f1f;transform:scaleX(0.9670);transform-origin:left center;left:1300.60px;z-index:6;">Invoice date</div>
<div class="t" id="p_item3" style="top:493.38px;font-size:15.8px;line-height:15.8px;font-weight:400;color:#1f1f1f;transform:scaleX(0.9478);transform-origin:left center;left:1301.50px;z-index:6;">Order #</div>
<div class="t" id="p_item4" style="top:533.23px;font-size:15.8px;line-height:15.8px;font-weight:400;color:#1f1f1f;transform:scaleX(0.9451);transform-origin:left center;left:1301.50px;z-index:6;">Customer</div>
<div class="t" id="p_item5" style="top:573.08px;font-size:15.8px;line-height:15.8px;font-weight:400;color:#1f1f1f;transform:scaleX(0.9714);transform-origin:left center;left:1300.60px;z-index:6;">Due date</div>
<div class="t" id="p_item6" style="top:612.93px;font-size:15.8px;line-height:15.8px;font-weight:400;color:#1f1f1f;transform:scaleX(0.9358);transform-origin:left center;left:1300.60px;z-index:6;">Status</div>
<div class="t" id="p_item7" style="top:652.78px;font-size:15.8px;line-height:15.8px;font-weight:400;color:#1f1f1f;transform:scaleX(0.9784);transform-origin:left center;left:1301.50px;z-index:6;">Amount due</div>
<div class="t" id="p_avail" style="top:705.02px;font-size:13.8px;line-height:13.8px;font-weight:400;color:#555;transform:scaleX(0.9325);transform-origin:left center;left:1265.92px;z-index:6;">Available columns</div>
<div class="t" id="p_av0" style="top:736.73px;font-size:15.8px;line-height:15.8px;font-weight:400;color:#1f1f1f;transform:scaleX(0.9682);transform-origin:left center;left:1300.60px;z-index:6;">Payment method</div>
<div class="t" id="p_av1" style="top:776.73px;font-size:15.8px;line-height:15.8px;font-weight:400;color:#1f1f1f;transform:scaleX(0.9643);transform-origin:left center;left:1300.60px;z-index:6;">Payment terms</div>
<div class="t" id="p_av2" style="top:816.73px;font-size:15.8px;line-height:15.8px;font-weight:400;color:#1f1f1f;transform:scaleX(0.9586);transform-origin:left center;left:1300.60px;z-index:6;">Sent date</div>
<div class="t" id="js" style="top:1026.88px;font-size:22px;line-height:22px;font-weight:400;color:#fff;left:16.40px;width:45px;text-align:center;transform:scaleX(0.86);">JS</div>
<div class="t" id="r6_amt" style="top:848.63px;font-size:15.8px;line-height:15.8px;font-weight:400;color:#1f1f1f;left:1502.50px;transform:scaleX(0.8);transform-origin:left center;">$XXXX</div>
<div class="t" id="r6_paid" style="top:850.95px;font-size:14px;line-height:14px;font-weight:700;color:#ffffff;left:1356.00px;">Paid</div>
</body></html>
